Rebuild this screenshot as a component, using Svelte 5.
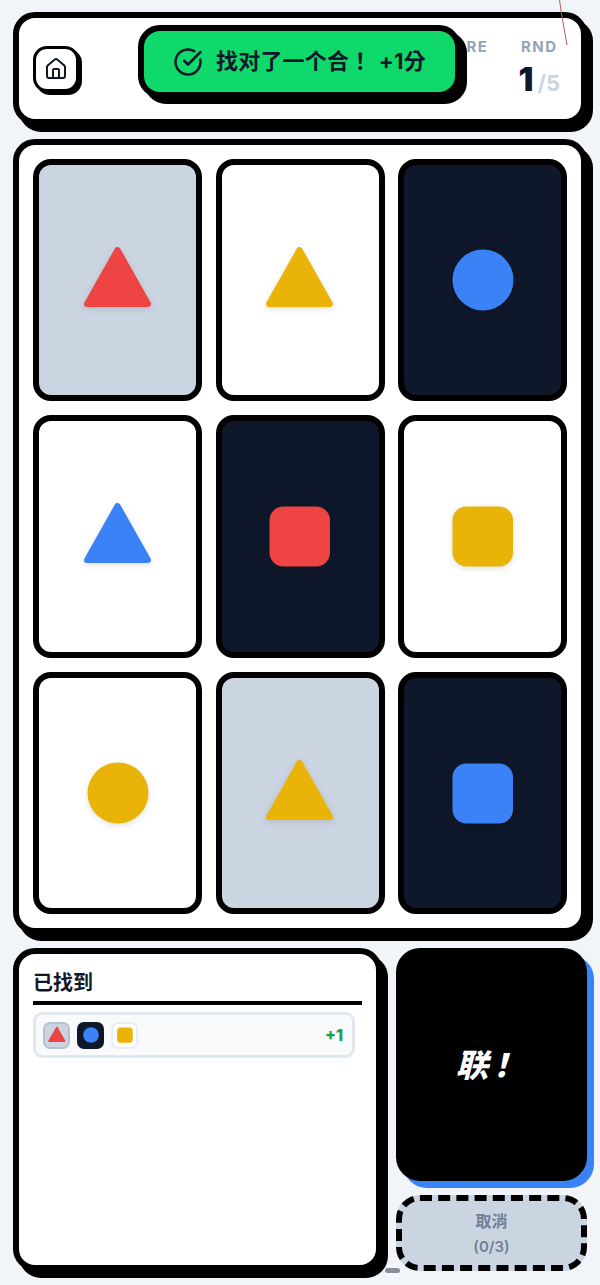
<script>
  const cards = [
    { bg: 'grey', shape: 'tri', color: '#ef4444' },
    { bg: 'white', shape: 'tri', color: '#eab308' },
    { bg: 'dark', shape: 'circle', color: '#3b82f6' },
    { bg: 'white', shape: 'tri', color: '#3b82f6' },
    { bg: 'dark', shape: 'square', color: '#ef4444' },
    { bg: 'white', shape: 'square', color: '#eab308' },
    { bg: 'white', shape: 'circle', color: '#eab308' },
    { bg: 'grey', shape: 'tri', color: '#eab308' },
    { bg: 'dark', shape: 'square', color: '#3b82f6' }
  ];
</script>

{#snippet shape(kind, color, cls)}
  <svg class={cls} viewBox="0 0 68 62" aria-hidden="true">
    {#if kind === 'tri'}
      <polygon points="33.5,1 64,55 3,55" fill={color} stroke={color} stroke-width="6" stroke-linejoin="round" />
    {:else if kind === 'circle'}
      <circle cx="34" cy="31" r="30.5" fill={color} />
    {:else}
      <rect x="3.5" y="1.5" width="60.5" height="60" rx="14" fill={color} />
    {/if}
  </svg>
{/snippet}

<main class="page">
  <header class="panel header">
    <button class="home" aria-label="首页">
      <svg viewBox="0 0 24 24" fill="none" stroke="currentColor" stroke-width="2" stroke-linecap="round" stroke-linejoin="round">
        <path d="M15 21v-8a1 1 0 0 0-1-1h-4a1 1 0 0 0-1 1v8" />
        <path d="M3 10a2 2 0 0 1 .709-1.528l7-5.999a2 2 0 0 1 2.582 0l7 5.999A2 2 0 0 1 21 10v9a2 2 0 0 1-2 2H5a2 2 0 0 1-2-2z" />
      </svg>
    </button>
    <div class="stats">
      <div class="stat">
        <span class="label">SCORE</span>
        <span class="value">1</span>
      </div>
      <div class="stat">
        <span class="label">RND</span>
        <span class="value">1<small>/5</small></span>
      </div>
    </div>
  </header>

  <section class="panel board">
    {#each cards as c}
      <div class="card {c.bg}">
        {@render shape(c.shape, c.color, 'big')}
      </div>
    {/each}
  </section>

  <section class="bottom">
    <div class="panel found">
      <h2>已找到</h2>
      <div class="set">
        <span class="mini grey">{@render shape('tri', '#ef4444', 'small')}</span>
        <span class="mini dark">{@render shape('circle', '#3b82f6', 'small')}</span>
        <span class="mini white">{@render shape('square', '#eab308', 'small')}</span>
        <span class="plus">+1</span>
      </div>
    </div>
    <div class="actions">
      <button class="set-btn">联！</button>
      <button class="cancel">取消<br /><span>(0/3)</span></button>
    </div>
  </section>
</main>

<div class="toast">
  <svg viewBox="0 0 24 24" fill="none" stroke="currentColor" stroke-width="2" stroke-linecap="round" stroke-linejoin="round">
    <path d="M21.801 10A10 10 0 1 1 17 3.335" />
    <path d="m9 11 3 3L22 4" />
  </svg>
  <span>找对了一个合！ +1分</span>
</div>

<svg class="scribble" viewBox="0 0 20 50" aria-hidden="true">
  <path d="M1.5 0 L4 17 L9 45" fill="none" stroke="#b85c5c" stroke-width="1" />
</svg>
<div class="grab"></div>

<style>
  :global(body) {
    margin: 0;
    background: #f1f5f9;
    font-family: Inter, "Noto Sans CJK TC", sans-serif;
    color: #0f172a;
  }
  .page {
    box-sizing: border-box;
    width: 600px;
    height: 1285px;
    padding: 12px 13px;
    display: flex;
    flex-direction: column;
    gap: 14px;
    overflow: hidden;
  }
  .panel {
    box-sizing: border-box;
    background: #fff;
    border: 6px solid #000;
    border-radius: 22px;
    box-shadow: 6px 7px 0 #000;
  }
  .header {
    height: 113px;
    padding: 0 21px 0 14px;
    display: flex;
    align-items: center;
    justify-content: space-between;
  }
  .home {
    box-sizing: border-box;
    width: 46px;
    height: 46px;
    padding: 0;
    background: #fff;
    border: 3px solid #000;
    border-radius: 14px;
    box-shadow: 3px 3px 0 #000;
    color: #0f172a;
    display: flex;
    align-items: center;
    justify-content: center;
  }
  .home svg {
    width: 24px;
    height: 24px;
  }
  .stats {
    display: flex;
    gap: 30px;
    margin-top: 3px;
  }
  .stat {
    display: flex;
    flex-direction: column;
    align-items: center;
    gap: 3px;
  }
  .label {
    font-size: 15px;
    font-weight: 700;
    letter-spacing: 1.5px;
    line-height: 18px;
    color: #94a3b8;
  }
  .value {
    font-size: 33px;
    font-weight: 900;
    line-height: 40px;
  }
  .value small {
    font-size: 22px;
    font-weight: 700;
    color: #cbd5e1;
    margin-left: 4px;
  }
  .board {
    height: 795px;
    padding: 14px;
    display: grid;
    grid-template-columns: repeat(3, 1fr);
    grid-template-rows: repeat(3, 1fr);
    gap: 14px 13.5px;
  }
  .card {
    box-sizing: border-box;
    border: 6px solid #000;
    border-radius: 18px;
    display: flex;
    align-items: center;
    justify-content: center;
  }
  .white { background: #fff; }
  .grey { background: #cbd5e1; }
  .dark { background: #0f172a; }
  .big {
    width: 68px;
    height: 62px;
    overflow: visible;
    filter: drop-shadow(0 2px 3px rgba(0, 0, 0, 0.12));
  }
  .bottom {
    display: grid;
    grid-template-columns: 369px 191px;
    gap: 14px;
    height: 323px;
  }
  .found {
    padding: 15px 14px 0;
  }
  h2 {
    margin: 0;
    padding-bottom: 3px;
    border-bottom: 4px solid #000;
    font-size: 20px;
    line-height: 29px;
    font-weight: 700;
  }
  .set {
    box-sizing: border-box;
    width: 322px;
    height: 46px;
    margin-top: 7px;
    padding: 0 9px 0 7px;
    background: #f8fafc;
    border: 3px solid #e2e8f0;
    border-radius: 9px;
    display: flex;
    align-items: center;
    gap: 7px;
  }
  .mini {
    box-sizing: border-box;
    width: 27px;
    height: 27px;
    border: 2px solid #e9eef4;
    border-radius: 7px;
    display: flex;
    align-items: center;
    justify-content: center;
  }
  .mini.grey { border-color: #b6c2d0; }
  .mini.dark { border-color: #0f172a; }
  .small {
    width: 18px;
    height: 16px;
    overflow: visible;
  }
  .plus {
    margin-left: auto;
    font-size: 16px;
    font-weight: 800;
    color: #16a34a;
  }
  .actions {
    display: flex;
    flex-direction: column;
    gap: 14px;
  }
  button {
    font-family: inherit;
  }
  .set-btn {
    flex: 1;
    padding: 0 13px 3px 0;
    background: #000;
    border: none;
    border-radius: 24px;
    box-shadow: 7px 7px 0 #3b82f6;
    color: #fff;
    font-size: 32px;
    font-weight: 800;
    font-style: italic;
    letter-spacing: -3px;
  }
  .cancel {
    box-sizing: border-box;
    height: 76px;
    padding: 2px 0 0;
    background: #cbd5e1;
    border: 6px dashed #000;
    border-radius: 24px;
    color: #718096;
    font-size: 16px;
    font-weight: 700;
    line-height: 25px;
  }
  .cancel span {
    font-size: 15px;
    font-weight: 600;
  }
  .toast {
    position: absolute;
    left: 138px;
    top: 25px;
    box-sizing: border-box;
    width: 323px;
    height: 73px;
    padding-left: 29px;
    background: #0fd96b;
    border: 6px solid #000;
    border-radius: 22px;
    box-shadow: 6px 6px 0 #000;
    display: flex;
    align-items: center;
    gap: 13px;
    font-size: 22px;
    font-weight: 700;
    letter-spacing: 0.2px;
    word-spacing: 2px;
    white-space: nowrap;
  }
  .toast span {
    padding-bottom: 5px;
  }
  .toast svg {
    width: 30px;
    height: 30px;
    flex: none;
  }
  .scribble {
    position: absolute;
    left: 558px;
    top: 0;
    width: 20px;
    height: 50px;
  }
  .grab {
    position: absolute;
    left: 385px;
    top: 1268px;
    width: 15px;
    height: 5px;
    border-radius: 3px;
    background: #8a8f96;
  }
</style>
